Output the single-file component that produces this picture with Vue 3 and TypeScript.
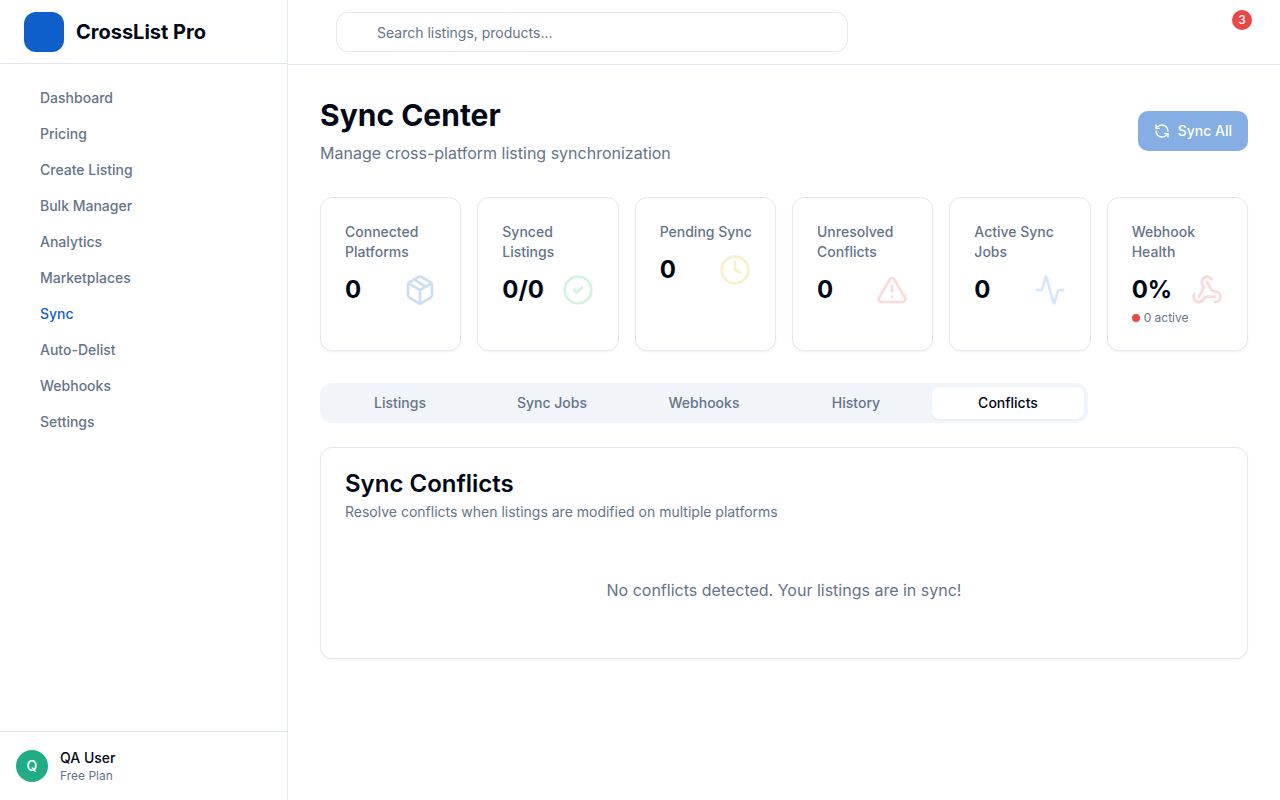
<script setup lang="ts">
import { ref } from 'vue'

interface Shape {
  d: string
}

interface Stat {
  label: string
  value: string
  tone: string
  circle?: boolean
  paths: Shape[]
  note?: string
}

const navItems: string[] = [
  'Dashboard',
  'Pricing',
  'Create Listing',
  'Bulk Manager',
  'Analytics',
  'Marketplaces',
  'Sync',
  'Auto-Delist',
  'Webhooks',
  'Settings',
]
const currentPage = 'Sync'

const stats: Stat[] = [
  {
    label: 'Connected Platforms',
    value: '0',
    tone: 'primary',
    paths: [
      { d: 'M11 21.73a2 2 0 0 0 2 0l7-4A2 2 0 0 0 21 16V8a2 2 0 0 0-1-1.73l-7-4a2 2 0 0 0-2 0l-7 4A2 2 0 0 0 3 8v8a2 2 0 0 0 1 1.73z' },
      { d: 'M12 22V12' },
      { d: 'M3.3 7 12 12l8.7-5' },
      { d: 'm7.5 4.27 9 5.15' },
    ],
  },
  {
    label: 'Synced Listings',
    value: '0/0',
    tone: 'green',
    circle: true,
    paths: [{ d: 'm9 12 2 2 4-4' }],
  },
  {
    label: 'Pending Sync',
    value: '0',
    tone: 'yellow',
    circle: true,
    paths: [{ d: 'M12 6v6l4 2' }],
  },
  {
    label: 'Unresolved Conflicts',
    value: '0',
    tone: 'red',
    paths: [
      { d: 'm21.73 18-8-14a2 2 0 0 0-3.48 0l-8 14A2 2 0 0 0 4 21h16a2 2 0 0 0 1.73-3' },
      { d: 'M12 9v4' },
      { d: 'M12 17h.01' },
    ],
  },
  {
    label: 'Active Sync Jobs',
    value: '0',
    tone: 'blue',
    paths: [
      { d: 'M22 12h-2.48a2 2 0 0 0-1.93 1.46l-2.35 8.36a.25.25 0 0 1-.48 0L9.24 2.18a.25.25 0 0 0-.48 0l-2.35 8.36A2 2 0 0 1 4.49 12H2' },
    ],
  },
  {
    label: 'Webhook Health',
    value: '0%',
    tone: 'red',
    note: '0 active',
    paths: [
      { d: 'M18 16.98h-5.99c-1.1 0-1.95.94-2.48 1.9A4 4 0 0 1 2 17c.01-.7.2-1.4.57-2' },
      { d: 'm6 17 3.13-5.78c.53-.97.1-2.18-.5-3.1a4 4 0 1 1 6.89-4.06' },
      { d: 'm12 6 3.13 5.73C15.66 12.7 16.9 13 18 13a4 4 0 0 1 0 8' },
    ],
  },
]

const tabs: string[] = ['Listings', 'Sync Jobs', 'Webhooks', 'History', 'Conflicts']
const activeTab = ref('Conflicts')
const query = ref('')
</script>

<template>
  <div class="app">
    <aside class="sidebar">
      <div class="brand">
        <span class="brand-mark"></span>
        <span class="brand-name">CrossList Pro</span>
      </div>
      <nav class="nav" aria-label="Main">
        <a
          v-for="item in navItems"
          :key="item"
          href="#"
          class="nav-link"
          :class="{ current: item === currentPage }"
          >{{ item }}</a
        >
      </nav>
      <div class="account">
        <span class="avatar">Q</span>
        <div>
          <div class="account-name">QA User</div>
          <div class="account-plan">Free Plan</div>
        </div>
      </div>
    </aside>

    <div class="page">
      <header class="topbar">
        <input
          v-model="query"
          class="search"
          type="search"
          aria-label="Search listings, products"
          placeholder="Search listings, products..."
        />
        <button class="bell" type="button" aria-label="Notifications">
          <span class="badge">3</span>
        </button>
      </header>

      <main class="main">
        <div class="heading">
          <div>
            <h1>Sync Center</h1>
            <p class="subtitle">Manage cross-platform listing synchronization</p>
          </div>
          <button class="sync-all" type="button" disabled>
            <svg class="sync-icon" viewBox="0 0 24 24" aria-hidden="true">
              <path d="M21 12a9 9 0 0 0-9-9 9.75 9.75 0 0 0-6.74 2.74L3 8" />
              <path d="M3 3v5h5" />
              <path d="M3 12a9 9 0 0 0 9 9 9.75 9.75 0 0 0 6.74-2.74L21 16" />
              <path d="M16 16h5v5" />
            </svg>
            Sync All
          </button>
        </div>

        <section class="stats" aria-label="Sync summary">
          <article v-for="stat in stats" :key="stat.label" class="card stat">
            <h3 class="stat-label">{{ stat.label }}</h3>
            <div class="stat-row">
              <span class="stat-value">{{ stat.value }}</span>
              <svg class="stat-icon" :class="stat.tone" viewBox="0 0 24 24" aria-hidden="true">
                <circle v-if="stat.circle" cx="12" cy="12" r="10" />
                <path v-for="shape in stat.paths" :key="shape.d" :d="shape.d" />
              </svg>
            </div>
            <div v-if="stat.note" class="stat-note"><span class="dot"></span>{{ stat.note }}</div>
          </article>
        </section>

        <div class="tabs" role="tablist">
          <button
            v-for="tab in tabs"
            :key="tab"
            type="button"
            role="tab"
            class="tab"
            :class="{ active: tab === activeTab }"
            :aria-selected="tab === activeTab"
            @click="activeTab = tab"
          >
            {{ tab }}
          </button>
        </div>

        <section class="card panel">
          <h2>Sync Conflicts</h2>
          <p class="panel-text">Resolve conflicts when listings are modified on multiple platforms</p>
          <p class="empty">No conflicts detected. Your listings are in sync!</p>
        </section>
      </main>
    </div>
  </div>
</template>

<style>
body {
  margin: 0;
  background: #fff;
}
</style>

<style scoped>
.app {
  display: flex;
  min-height: 100vh;
  background: #fff;
  color: #020817;
  font-family: Inter, "Liberation Sans", sans-serif;
  font-size: 16px;
  line-height: 24px;
}
.app *,
.app {
  box-sizing: border-box;
}
h1,
h2,
h3,
p {
  margin: 0;
}
button,
input {
  font: inherit;
}

.sidebar {
  display: flex;
  flex-direction: column;
  flex: none;
  width: 288px;
  border-right: 1px solid #e2e8f0;
}
.brand {
  display: flex;
  align-items: center;
  gap: 12px;
  height: 64px;
  padding: 0 24px;
  border-bottom: 1px solid #e2e8f0;
}
.brand-mark {
  width: 40px;
  height: 40px;
  border-radius: 12px;
  background: #0d5fcc;
}
.brand-name {
  font-size: 20px;
  line-height: 28px;
  font-weight: 700;
}
.nav {
  display: flex;
  flex-direction: column;
  flex: 1;
  padding: 16px 24px;
}
.nav-link {
  padding: 8px 16px;
  color: #64748b;
  font-size: 14px;
  line-height: 20px;
  font-weight: 500;
  text-decoration: none;
}
.nav-link.current {
  color: #0d5fcc;
}
.account {
  display: flex;
  align-items: center;
  gap: 12px;
  padding: 16px;
  border-top: 1px solid #e2e8f0;
}
.avatar {
  display: grid;
  place-items: center;
  width: 32px;
  height: 32px;
  border-radius: 50%;
  background: #1fad85;
  color: #fff;
  font-size: 14px;
  font-weight: 500;
}
.account-name {
  font-size: 14px;
  line-height: 20px;
  font-weight: 500;
}
.account-plan {
  color: #64748b;
  font-size: 12px;
  line-height: 16px;
}

.page {
  flex: 1;
  min-width: 0;
}
.topbar {
  display: flex;
  align-items: center;
  justify-content: space-between;
  padding: 12px 32px 12px 48px;
  border-bottom: 1px solid #e2e8f0;
}
.search {
  width: 100%;
  max-width: 512px;
  height: 40px;
  padding: 8px 12px 8px 40px;
  border: 1px solid #e2e8f0;
  border-radius: 12px;
  background: #fff;
  color: #020817;
  font-size: 14px;
  line-height: 20px;
  appearance: none;
}
.search::placeholder {
  color: #64748b;
  opacity: 1;
}
.bell {
  position: relative;
  width: 40px;
  height: 40px;
  padding: 0;
  border: 0;
  background: transparent;
}
.badge {
  position: absolute;
  top: -2px;
  right: -4px;
  width: 20px;
  height: 20px;
  border-radius: 50%;
  background: #ef4444;
  color: #fff;
  font-size: 12px;
  line-height: 20px;
  font-weight: 500;
  text-align: center;
}

.main {
  padding: 32px;
}
.heading {
  display: flex;
  align-items: center;
  justify-content: space-between;
}
h1 {
  font-size: 30px;
  line-height: 36px;
  font-weight: 700;
}
.subtitle {
  margin-top: 8px;
  color: #64748b;
}
.sync-all {
  display: flex;
  align-items: center;
  gap: 8px;
  height: 40px;
  padding: 0 16px;
  border: 0;
  border-radius: 10px;
  background: #0d5fcc;
  color: #fff;
  font-size: 14px;
  line-height: 20px;
  font-weight: 500;
  opacity: 0.5;
}
.sync-icon,
.stat-icon {
  fill: none;
  stroke: currentColor;
  stroke-width: 2;
  stroke-linecap: round;
  stroke-linejoin: round;
}
.sync-icon {
  width: 16px;
  height: 16px;
}

.card {
  padding: 24px;
  border: 1px solid #e2e8f0;
  border-radius: 12px;
  background: #fff;
  box-shadow: 0 1px 2px rgba(0, 0, 0, 0.05);
}
.stats {
  display: grid;
  grid-template-columns: repeat(6, minmax(0, 1fr));
  gap: 16px;
  margin-top: 32px;
}
.stat {
  padding-right: 16px;
}
.stat-label {
  color: #64748b;
  font-size: 14px;
  line-height: 20px;
  font-weight: 500;
}
.stat-row {
  display: flex;
  align-items: center;
  justify-content: space-between;
  margin-top: 12px;
  padding-right: 8px;
}
.stat-value {
  font-size: 24px;
  line-height: 32px;
  font-weight: 700;
}
.stat-icon {
  flex: none;
  width: 32px;
  height: 32px;
  opacity: 0.2;
}
.primary {
  color: #0d5fcc;
}
.green {
  color: #22c55e;
}
.yellow {
  color: #eab308;
}
.red {
  color: #ef4444;
}
.blue {
  color: #3b82f6;
}
.stat-note {
  display: flex;
  align-items: center;
  gap: 4px;
  margin-top: 4px;
  color: #64748b;
  font-size: 12px;
  line-height: 16px;
}
.dot {
  width: 8px;
  height: 8px;
  border-radius: 50%;
  background: #ef4444;
}

.tabs {
  display: grid;
  grid-template-columns: repeat(5, 1fr);
  max-width: 768px;
  margin-top: 32px;
  padding: 4px;
  border-radius: 12px;
  background: #f1f5f9;
}
.tab {
  padding: 6px 12px;
  border: 0;
  border-radius: 8px;
  background: transparent;
  color: #64748b;
  font-size: 14px;
  line-height: 20px;
  font-weight: 500;
}
.tab.active {
  background: #fff;
  color: #020817;
  box-shadow: 0 1px 2px rgba(0, 0, 0, 0.05);
}

.panel {
  margin-top: 24px;
}
h2 {
  font-size: 24px;
  line-height: 24px;
  font-weight: 600;
}
.panel-text {
  margin-top: 6px;
  color: #64748b;
  font-size: 14px;
  line-height: 20px;
}
.empty {
  padding: 32px 0;
  margin-top: 24px;
  color: #64748b;
  text-align: center;
}
</style>
